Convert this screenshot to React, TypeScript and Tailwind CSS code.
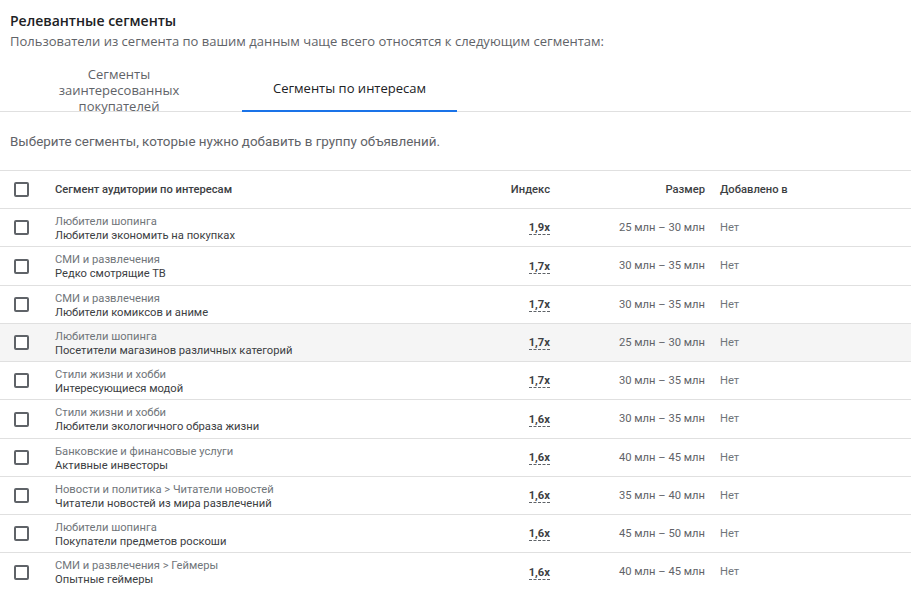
import React from "react";

type Row = { cat: string; name: string; idx: string; size: string; hover?: boolean; tall?: boolean };

const rows: Row[] = [
  { cat: "Любители шопинга", name: "Любители экономить на покупках", idx: "1,9x", size: "25 млн – 30 млн" },
  { cat: "СМИ и развлечения", name: "Редко смотрящие ТВ", idx: "1,7x", size: "30 млн – 35 млн", tall: true },
  { cat: "СМИ и развлечения", name: "Любители комиксов и аниме", idx: "1,7x", size: "30 млн – 35 млн" },
  { cat: "Любители шопинга", name: "Посетители магазинов различных категорий", idx: "1,7x", size: "25 млн – 30 млн", hover: true },
  { cat: "Стили жизни и хобби", name: "Интересующиеся модой", idx: "1,7x", size: "30 млн – 35 млн" },
  { cat: "Стили жизни и хобби", name: "Любители экологичного образа жизни", idx: "1,6x", size: "30 млн – 35 млн", tall: true },
  { cat: "Банковские и финансовые услуги", name: "Активные инвесторы", idx: "1,6x", size: "40 млн – 45 млн" },
  { cat: "Новости и политика > Читатели новостей", name: "Читатели новостей из мира развлечений", idx: "1,6x", size: "35 млн – 40 млн" },
  { cat: "Любители шопинга", name: "Покупатели предметов роскоши", idx: "1,6x", size: "45 млн – 50 млн" },
  { cat: "СМИ и развлечения > Геймеры", name: "Опытные геймеры", idx: "1,6x", size: "40 млн – 45 млн", tall: true },
];

function Checkbox() {
  return (
    <div className="w-[15px] h-[15px] rounded-[2px] border-2 border-[#5f6368] bg-white" />
  );
}

export default function App() {
  return (
    <div className="w-[911px] h-[590px] overflow-hidden bg-white" style={{ fontFamily: "Roboto, 'Liberation Sans', sans-serif" }}>
      <div className="pl-[10px] pt-[11px]">
        <div className="text-[14px] leading-[20px] font-semibold text-[#202124]" style={{ fontFamily: "'Open Sans', Roboto, sans-serif" }}>
          Релевантные сегменты
        </div>
        <div className="text-[13px] leading-[20px] text-[#5f6368]" style={{ fontFamily: "'Open Sans', Roboto, sans-serif" }}>
          Пользователи из сегмента по вашим данным чаще всего относятся к следующим сегментам:
        </div>
      </div>
      <div className="mt-[12px] h-[49px] border-b border-[#e0e0e0] flex" style={{ fontFamily: "'Open Sans', Roboto, sans-serif" }}>
        <div className="w-[238px] flex justify-center pt-[3px]">
          <div className="w-[140px] text-center text-[13px] leading-[16px] font-medium text-[#5f6368]">
            Сегменты заинтересованных покупателей
          </div>
        </div>
        <div className="ml-[4px] w-[215px] flex flex-col">
          <div className="flex-1 flex items-center justify-center text-[13px] font-medium text-[#202124] pt-[5px]">
            Сегменты по интересам
          </div>
          <div className="h-[2px] bg-[#1a73e8] mb-[-1px]" />
        </div>
      </div>
      <div className="pl-[10px] pt-[20px] h-[58px] text-[13.4px] leading-[20px] text-[#5f6368]">
        Выберите сегменты, которые нужно добавить в группу объявлений.
      </div>
      <div className="border-t border-[#e0e0e0]">
        <div className="grid grid-cols-[55px_395px_100px_155px_1fr] h-[38px] items-center border-b border-[#e0e0e0] text-[11.2px] font-medium text-[#3c4043]">
          <div className="pl-[14px]"><Checkbox /></div>
          <div className="pt-[1px]">Сегмент аудитории по интересам</div>
          <div className="text-right pt-[1px]">Индекс</div>
          <div className="text-right pt-[1px]">Размер</div>
          <div className="pl-[15px] pt-[1px]">Добавлено в</div>
        </div>
        {rows.map((r, i) => (
          <div
            key={i}
            className={
              "grid grid-cols-[55px_395px_100px_155px_1fr] items-center border-b border-[#e0e0e0] text-[11.2px] " +
              (r.tall ? "h-[39px] " : "h-[38px] ") +
              (r.hover ? "bg-[#f5f5f5]" : "bg-white")
            }
          >
            <div className="pl-[14px]"><Checkbox /></div>
            <div className="leading-[14px] pt-[2px]">
              <div className="text-[#70757a]">{r.cat}</div>
              <div className="text-[#3c4043]">{r.name}</div>
            </div>
            <div className="text-right pt-[2px]">
              <span className="font-bold text-[#3c4043] border-b border-dashed border-[#5f6368] leading-[13px] inline-block">{r.idx}</span>
            </div>
            <div className="text-right text-[#5f6368] pt-[1px]">{r.size}</div>
            <div className="pl-[15px] text-[#70757a] pt-[1px]">Нет</div>
          </div>
        ))}
      </div>
    </div>
  );
}
